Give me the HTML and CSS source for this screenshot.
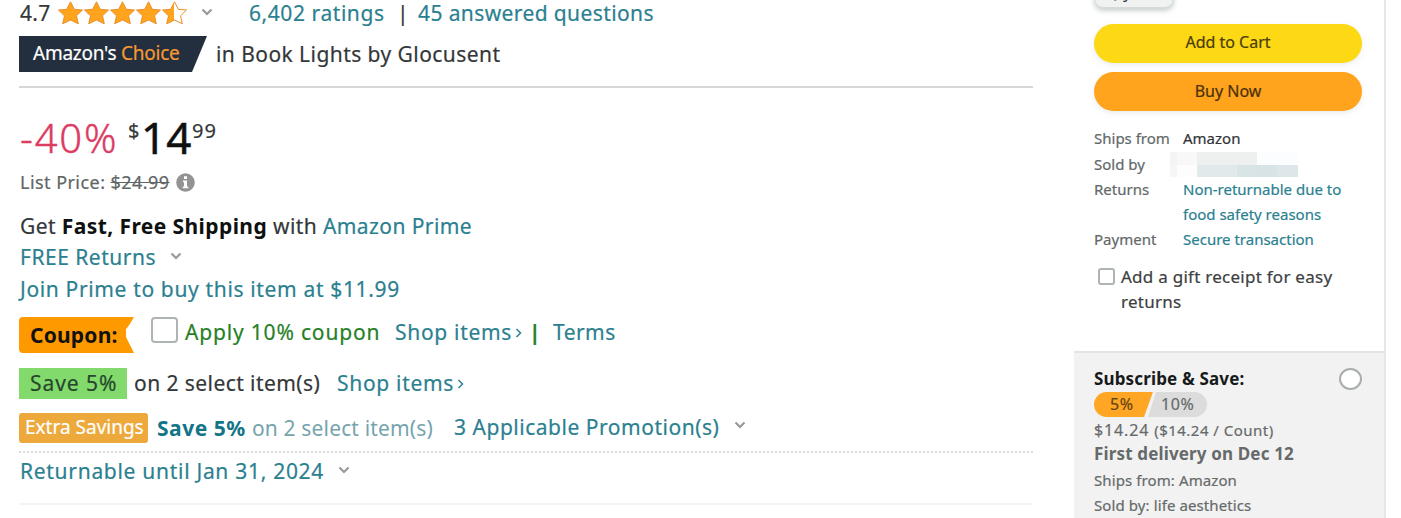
FILE: index.html
```html
<!DOCTYPE html>
<html lang="en">
<head>
<meta charset="utf-8">
<title>Product offer</title>
<link rel="stylesheet" href="styles.css">
</head>
<body>
<svg class="defs" width="0" height="0" aria-hidden="true">
  <defs>
    <linearGradient id="half"><stop offset="50%" stop-color="#ffa41c"/><stop offset="50%" stop-color="#fff"/></linearGradient>
    <path id="star" d="M12 .8 L15.8 8.3 L24 9 L18 14.8 L19.8 22.8 L12 19 L4.2 22.8 L6 14.8 L0 9 L8.2 8.3 Z"/>
    <path id="chev" d="M1.5 1.5 L6 6 L10.5 1.5" fill="none" stroke="#999" stroke-width="2.2"/>
  </defs>
</svg>
<div class="page">
  <main class="details">
    <div class="row rating">
      <span class="score">4.7</span>
      <svg class="stars" width="130" height="24" viewBox="0 0 130 24" fill="#ffa41c" stroke="#ea8f2c" stroke-width="1">
        <use href="#star" x=".5"/><use href="#star" x="26.5"/><use href="#star" x="52.5"/><use href="#star" x="78.5"/><use href="#star" x="104.5" fill="url(#half)"/>
      </svg>
      <svg class="chev" width="12" height="8"><use href="#chev"/></svg>
      <a class="ratings">6,402 ratings</a>
      <span class="pipe">|</span>
      <a class="questions">45 answered questions</a>
    </div>
    <div class="row choice">
      <span class="badge"><span class="badge-text">Amazon's <b>Choice</b></span></span>
      <span class="category">in Book Lights by Glocusent</span>
    </div>
    <hr class="rule">
    <div class="row price">
      <span class="discount">-40%</span>
      <span class="symbol">$</span><span class="whole">14</span><span class="cents">99</span>
    </div>
    <div class="row list">
      <span class="list-label">List Price: <s>$24.99</s></span>
      <svg width="19" height="19" viewBox="0 0 19 19"><circle cx="9.5" cy="9.5" r="9.3" fill="#939393"/><path d="M7 7.5h4v6h1.3v1.8H6.8v-1.8H8V9.2H7zM8 3.3h3v2.6H8z" fill="#fff"/></svg>
    </div>
    <div class="row shipping"><span>Get <strong>Fast, Free Shipping</strong> with <a>Amazon Prime</a></span></div>
    <div class="row free"><a>FREE Returns</a><svg class="chev" width="12" height="8"><use href="#chev"/></svg></div>
    <div class="row join"><a>Join Prime to buy this item at $11.99</a></div>
    <div class="row coupon">
      <span class="tag">
        <svg class="tag-shape" width="115" height="36" viewBox="0 0 115 36"><path d="M4 0H115Q110 9 107 12V20Q110 26 115 36H4Q0 36 0 32V4Q0 0 4 0Z" fill="#ff9900"/></svg>
        <span class="tag-text">Coupon:</span>
      </span>
      <span class="box"></span>
      <span class="apply">Apply 10% coupon</span>
      <a class="shop">Shop items</a><svg class="arrow" width="8" height="12"><path d="M1.5 2L5.5 6L1.5 10"/></svg>
      <span class="bar">|</span>
      <a class="terms">Terms</a>
    </div>
    <div class="row save">
      <span class="green">Save 5%</span>
      <span class="select">on 2 select item(s)</span>
      <a class="shop">Shop items</a><svg class="arrow" width="8" height="12"><path d="M1.5 2L5.5 6L1.5 10"/></svg>
    </div>
    <div class="row extra">
      <span class="extra-tag">Extra Savings</span>
      <strong class="extra-save">Save 5%</strong>
      <span class="extra-select">on 2 select item(s)</span>
      <a class="promos">3 Applicable Promotion(s)</a>
      <svg class="chev" width="12" height="8"><use href="#chev"/></svg>
    </div>
    <hr class="rule dotted">
    <div class="row until"><a>Returnable until Jan 31, 2024</a><svg class="chev" width="12" height="8"><use href="#chev"/></svg></div>
    <hr class="rule faint">
  </main>
  <aside class="buybox">
    <div class="purchase">
      <div class="qty"><span>Qty:</span><span>1</span><svg class="chev" width="12" height="8"><use href="#chev"/></svg></div>
      <button class="btn cart">Add to Cart</button>
      <button class="btn buy">Buy Now</button>
      <dl class="facts">
        <dt>Ships from</dt><dd class="dark">Amazon</dd>
        <dt>Sold by</dt><dd class="masked"><i class="m1"></i><i class="m2"></i><i class="m3"></i><i class="m4"></i><i class="m5"></i><i class="m6"></i></dd>
        <dt>Returns</dt><dd>Non-returnable due to<br>food safety reasons</dd>
        <dt>Payment</dt><dd>Secure transaction</dd>
      </dl>
      <div class="gift"><span class="box small"></span><span class="gift-text">Add a gift receipt for easy<br>returns</span></div>
    </div>
    <div class="subscribe">
      <div class="sub-head"><strong>Subscribe &amp; Save:</strong><span class="radio"></span></div>
      <div class="tiers"><span class="tier on">5%</span><span class="tier off">10%</span></div>
      <div class="sub-price">$14.24 <small>($14.24 / Count)</small></div>
      <div class="first">First delivery on Dec 12</div>
      <div class="line">Ships from: Amazon</div>
      <div class="line">Sold by: life aesthetics</div>
    </div>
  </aside>
</div>
</body>
</html>
```
FILE: styles.css
```css
* { box-sizing: border-box; }
body { margin: 0; background: #fff; color: #333738; font: 21px/26px "Noto Sans", sans-serif; -webkit-text-stroke: .2px; overflow: hidden; }
.defs { position: absolute; }
.page { display: flex; width: 1401px; height: 518px; overflow: hidden; }
a { color: #2b8090; }
strong, .first, .tag-text { -webkit-text-stroke: 0; }
.details { width: 1033px; padding-left: 19px; flex: none; }
.row { display: flex; align-items: center; white-space: nowrap; padding-left: 1px; }
.row > * { flex: none; }
.rule { border: 0; margin: 0; height: 2px; background: #d7d7d7; }
.rating { height: 26px; }
.score { width: 38px; letter-spacing: .3px; }
.rating .chev { margin: -2px 36px 0 13px; }
.ratings { width: 148px; letter-spacing: .57px; }
.pipe { width: 21px; }
.questions { letter-spacing: .39px; }
.choice { height: 36px; margin: 10px 0 14px; padding-left: 0; }
.badge { width: 188px; height: 36px; display: flex; align-items: center; padding: 0 0 2px 14px; background: #232f3e; clip-path: polygon(0 0, 100% 0, 173px 100%, 0 100%); color: #fff; font-size: 19px; letter-spacing: -.25px; }
.badge b { font-weight: 400; color: #f69931; }
.category { margin-left: 9px; letter-spacing: .44px; }
.price { height: 62px; margin-top: 20px; align-items: flex-start; color: #0f1111; }
.discount { width: 108px; font-size: 40px; line-height: 60px; font-weight: 300; letter-spacing: 1.8px; color: #dc3b62; -webkit-text-stroke: .4px #dc3b62; }
.symbol { font-size: 20px; line-height: 46px; width: 13px; }
.whole { font-size: 44px; line-height: 59px; width: 51px; -webkit-text-stroke: .5px; }
.cents { font-size: 20px; line-height: 46px; letter-spacing: 1px; }
.symbol, .cents { color: #333738; }
.list { height: 26px; margin-top: -1px; color: #606565; font-size: 18px; gap: 6px; }
.list-label { letter-spacing: .45px; }
.shipping { height: 32px; margin-top: 15px; letter-spacing: .41px; }
.shipping strong { color: #0f1111; }
.free { height: 30px; gap: 14px; letter-spacing: .5px; }
.free .chev { margin-top: -3px; }
.join { height: 33px; letter-spacing: .65px; }
.coupon { height: 36px; margin-top: 12px; padding: 0; }
.tag { display: grid; width: 115px; height: 36px; }
.tag > * { grid-area: 1 / 1; }
.tag-text { z-index: 1; padding-left: 11px; line-height: 37px; color: #111; font-weight: 700; letter-spacing: .2px; }
.box { width: 27px; height: 26px; border: 2px solid #aeb3b3; border-radius: 4px; background: #fff; }
.coupon .box { margin: -10px 7px 0 17px; }
.coupon .apply, .coupon a, .coupon .bar { margin-top: -7px; }
.apply { color: #267f26; width: 210px; letter-spacing: .82px; }
.bar { color: #267f26; font-weight: 700; width: 24px; }
.coupon .bar { margin-left: -1px; }
.shop { width: 119px; letter-spacing: .7px; }
.terms { letter-spacing: .45px; }
.arrow { margin: 1px 7px 0 1px; fill: none; stroke: #2b8090; stroke-width: 1.5; }
.coupon .arrow { margin-top: -5px; }
.save { height: 31px; margin-top: 15px; padding: 0; }
.green { width: 108px; height: 31px; line-height: 30px; padding-left: 11px; background: #81da6b; color: #26472b; letter-spacing: .95px; }
.select { margin-left: 7px; width: 203px; letter-spacing: .43px; margin-top: -1px; }
.save .shop { margin-top: -1px; }
.extra { height: 30px; margin-top: 14px; padding: 0; }
.extra-tag { width: 129px; height: 30px; line-height: 28px; padding-left: 6px; background: #eda93b; color: #fff; border-radius: 3px; font-size: 19px; }
.extra-save { color: #147587; margin: 0 0 0 9px; width: 95px; letter-spacing: .5px; }
.extra-select { color: #75a4ad; width: 202px; letter-spacing: .15px; -webkit-text-stroke: 0; }
.promos { width: 266px; letter-spacing: .52px; margin-top: -3px; }
.extra .chev { margin: -6px 0 0 14px; }
.dotted { margin-top: 8px; background: none; border-top: 2px dotted #d8dada; }
.until { height: 36px; gap: 14px; letter-spacing: .71px; }
.until .chev { margin-top: -3px; }
.faint { margin-top: 14px; background: #f2f3f3; }

.buybox { width: 312px; margin-left: 41px; border-right: 2px solid #e5e8e8; font-size: 16px; line-height: 25px; }
.purchase { display: flow-root; height: 351px; padding: 0 22px 0 20px; }
.qty { width: 80px; height: 31px; margin-top: -23px; padding: 2px 11px; display: flex; align-items: center; gap: 10px; background: #f0f2f2; border: 1px solid #d5d9d9; border-radius: 9px; box-shadow: 0 3px 5px #ccd2d2; font-size: 15px; }
.btn { display: block; width: 268px; height: 39px; border: 0; border-radius: 20px; font: 16px/35px "Noto Sans", sans-serif; padding: 0 0 3px; color: #493e09; box-shadow: 0 2px 5px rgba(213,217,217,.5); }
.cart { margin-top: 16px; background: #fdd814; }
.buy { margin-top: 9px; padding-bottom: 1px; background: #ffa41c; color: #49300b; }
.facts { display: grid; grid-template-columns: 89px 1fr; grid-template-rows: 26px 25px auto auto; margin: 15px 0 0; white-space: nowrap; font-size: 15px; color: #626868; }
.facts dd { margin: 0; color: #2b8090; }
.facts .dark { color: #303436; }
.facts .masked { display: grid; width: 129px; height: 25px; margin-left: -13px; grid-template: 13px 12px / 27px 60px 41px; }
.m1 { background: linear-gradient(90deg, #f3f4f4 7px, #f8f8f8 7px); }
.m2 { background: #eeefef; }
.m3 { background: #fcfdfe; }
.m4 { background: linear-gradient(90deg, #f5f6f6 7px, #fdfdfd 7px); }
.m5 { background: linear-gradient(90deg, #e1e9eb 40px, #d9e4e7 40px); }
.m6 { background: linear-gradient(90deg, #d7e3e6 20px, #dde6e9 20px); }
.gift { display: flex; margin-top: 12px; white-space: nowrap; color: #3c4041; }
.box.small { width: 17px; height: 17px; margin: 4px 6px 0 4px; border-radius: 3px; flex: none; }
.gift-text { font-size: 17px; letter-spacing: .26px; }
.subscribe { height: 167px; padding: 13px 22px 0 20px; background: #f2f2f2; border-top: 2px solid #e2e5e5; color: #666a6a; white-space: nowrap; }
.sub-head { display: flex; justify-content: space-between; align-items: center; height: 25px; color: #161a1a; font-size: 17px; letter-spacing: .15px; }
.radio { width: 23px; height: 22px; margin-top: 1px; border: 2px solid #a9adad; border-radius: 50%; background: #fff; }
.tiers { display: flex; height: 25px; margin-top: 1px; font-size: 16px; line-height: 25px; letter-spacing: .6px; }
.tier.on { width: 59px; padding-left: 16px; color: #65430f; background: #ffa724; border-radius: 13px 0 0 13px; clip-path: polygon(0 0, 100% 0, 50px 100%, 0 100%); }
.tier.off { width: 59px; margin-left: -5px; padding-left: 13px; background: #dcdcdc; border-radius: 0 13px 13px 0; clip-path: polygon(8px 0, 100% 0, 100% 100%, 0 100%); }
.sub-price { height: 25px; line-height: 26px; letter-spacing: .85px; }
.sub-price small { font-size: 15px; letter-spacing: .48px; }
.first { font-weight: 700; font-size: 17px; height: 25px; line-height: 24px; letter-spacing: .15px; }
.line { font-size: 15px; height: 25px; line-height: 26px; letter-spacing: .1px; }
```
